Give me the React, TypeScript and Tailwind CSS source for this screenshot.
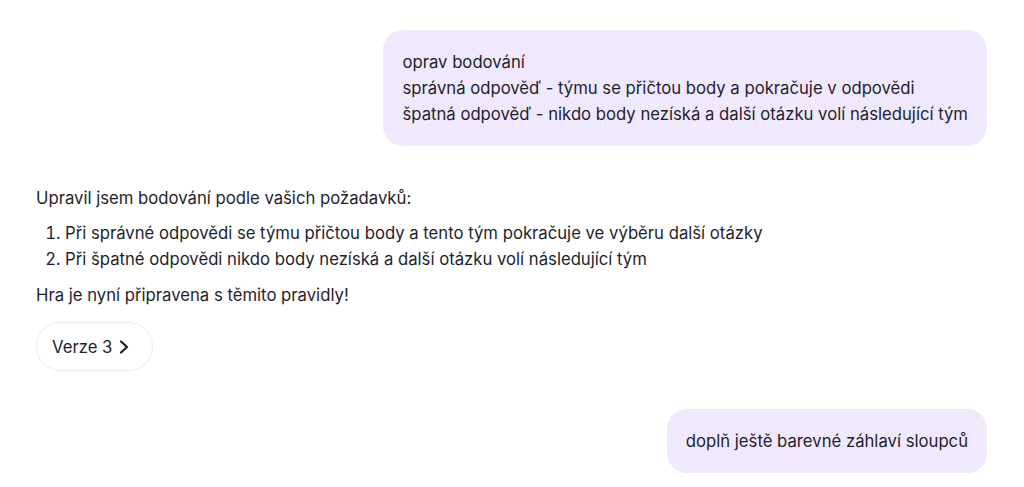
function UserBubble({ lines }: { lines: string[] }) {
  return (
    <div className="flex justify-end">
      <div className="w-fit rounded-[20px] bg-[#f0e9fe] px-[19px] py-[19px] text-[16.7px] leading-[26px] text-[#1e1e2a]">
        {lines.map((l) => (
          <div key={l}>{l}</div>
        ))}
      </div>
    </div>
  );
}

function App() {
  return (
    <div className="min-h-screen bg-white font-['Inter',sans-serif] text-[#1e1e2a]">
      <div className="px-[37px] pt-[30px] pl-[36px]">
        <UserBubble
          lines={[
            'oprav bodování',
            'správná odpověď - týmu se přičtou body a pokračuje v odpovědi',
            'špatná odpověď - nikdo body nezíská a další otázku volí následující tým',
          ]}
        />

        {/* Assistant reply */}
        <div className="mt-[39px] text-[16.7px] leading-[26px]">
          <p>Upravil jsem bodování podle vašich požadavků:</p>
          <ol className="mt-[9px] list-decimal pl-[29px]">
            <li>Při správné odpovědi se týmu přičtou body a tento tým pokračuje ve výběru další otázky</li>
            <li>Při špatné odpovědi nikdo body nezíská a další otázku volí následující tým</li>
          </ol>
          <p className="mt-[10px]">Hra je nyní připravena s těmito pravidly!</p>
          <button className="mt-[14px] flex h-[49px] items-center gap-[7px] rounded-full border border-[#ebebef] pl-[15px] pr-[23px]">
            Verze 3
            <svg width="10" height="14" viewBox="0 0 10 14" fill="none" stroke="currentColor" strokeWidth="2.2" strokeLinecap="round" strokeLinejoin="round">
              <polyline points="2,1.5 8,7 2,12.5" />
            </svg>
          </button>
        </div>

        <div className="mt-[38px]">
          <UserBubble lines={['doplň ještě barevné záhlaví sloupců']} />
        </div>
      </div>
    </div>
  );
}

export default App;
